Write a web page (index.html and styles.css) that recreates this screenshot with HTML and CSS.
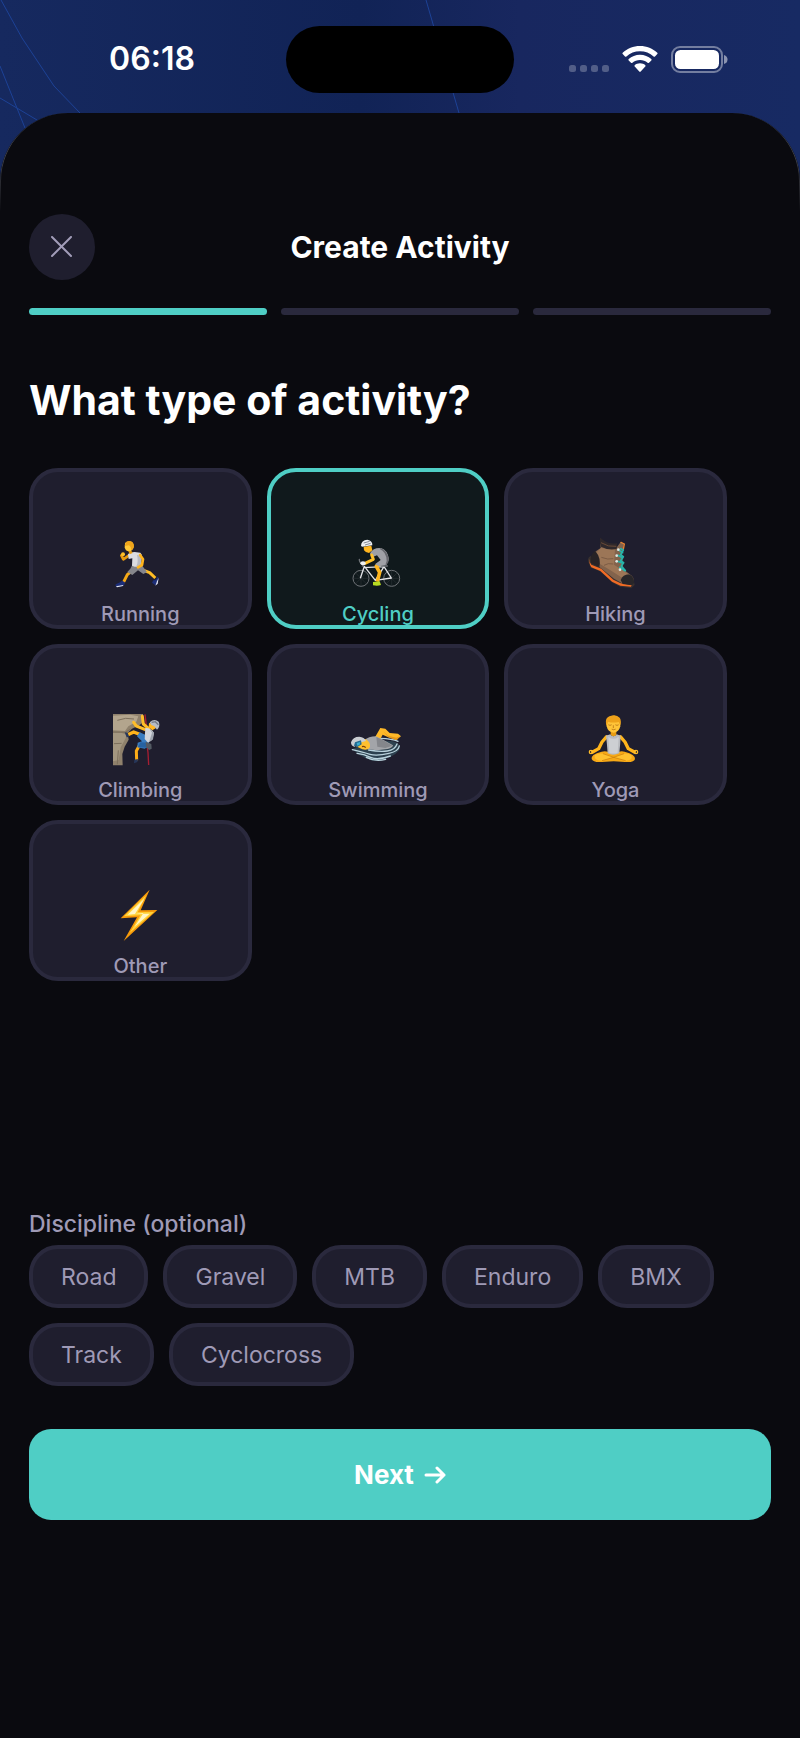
FILE: index.html
```html
<!DOCTYPE html>
<html lang="en">
<head>
  <meta charset="UTF-8">
  <meta name="viewport" content="width=device-width, initial-scale=1">
  <title>Create Activity</title>
  <link rel="stylesheet" href="styles.css">
</head>
<body>
  <div class="status">
    <svg class="status_lines" aria-hidden="true" width="800" height="200" viewBox="0 0 800 200">
      <path d="M1 0L22 38L54 86L80 113M0 66L25 128M0 98L37 120M426 0L459 113"/>
    </svg>
    <span class="time">06:18</span>
    <span class="island"></span>
    <div class="status_icons">
      <svg width="40" height="27" viewBox="0 0 40 27" fill="#fff" fill-opacity=".25" aria-hidden="true">
        <rect x="0" y="19" width="7" height="7" rx="2.500"/>
        <rect x="11" y="19" width="7" height="7" rx="2.500"/>
        <rect x="22" y="19" width="7" height="7" rx="2.500"/>
        <rect x="33" y="19" width="7" height="7" rx="2.500"/>
      </svg>
      <svg width="36" height="27" viewBox="0 0 36 27" fill="#fff" aria-hidden="true">
        <path d="M18 0C11.300 0 5.200 2.500.700 6.700Q0 7.400.700 8.100L3 10.400Q3.700 11 4.400 10.400C8 7.100 12.800 5.200 18 5.200S28 7.100 31.600 10.400Q32.300 11 33 10.400L35.300 8.100Q36 7.400 35.300 6.700C30.800 2.500 24.700 0 18 0Z"/>
        <path d="M18 8.700C13.600 8.700 9.700 10.300 6.700 13Q6 13.700 6.700 14.400L9 16.700Q9.700 17.300 10.400 16.700C12.500 14.900 15.100 13.900 18 13.900S23.500 14.900 25.600 16.700Q26.300 17.300 27 16.700L29.300 14.400Q30 13.700 29.300 13C26.300 10.300 22.400 8.700 18 8.700Z"/>
        <path d="M18 17.300C15.900 17.300 14.100 18 12.700 19.200Q12 19.900 12.700 20.600L17.300 25.600Q18 26.300 18.700 25.600L23.300 20.600Q24 19.900 23.300 19.200C21.900 18 20.100 17.300 18 17.300Z"/>
      </svg>
      <svg width="57" height="27" viewBox="0 0 57 27" aria-hidden="true">
        <rect x="1" y="1" width="50" height="25" rx="8" fill="none" stroke="#fff" stroke-opacity=".4" stroke-width="2"/>
        <rect x="4" y="4" width="44" height="19" rx="5.500" fill="#fff"/>
        <path d="M53 9Q56.500 10 56.500 13.500T53 18Z" fill="#fff" fill-opacity=".5"/>
      </svg>
    </div>
  </div>

  <main class="sheet">
    <header class="header">
      <button class="close" aria-label="Close">
        <svg width="22" height="22" viewBox="0 0 22 22"><path d="M1 1L20 20M20 1L1 20"/></svg>
      </button>
      <h1 class="title">Create Activity</h1>
    </header>

    <div class="progress">
      <span class="step active"></span>
      <span class="step"></span>
      <span class="step"></span>
    </div>

    <h2 class="question">What type of activity?</h2>

    <section class="cards">
      <button class="card">
        <svg class="emoji" viewBox="41 48 162 162" aria-hidden="true">
          <path d="M88 107L72 118L66 106" fill="none" stroke="#e79a10" stroke-width="8" stroke-linejoin="round" stroke-linecap="round"/>
          <circle cx="71" cy="103" r="6" fill="#ffbf28"/>
          <path d="M103 148L84 164L72 188" fill="none" stroke="#f5a916" stroke-width="9" stroke-linejoin="round"/>
          <path d="M127 149L151 158L168 174" fill="none" stroke="#ffbd24" stroke-width="9" stroke-linejoin="round"/>
          <path d="M49 193Q63 187 68 182L77 187Q77 195 70 198L52 202Q47 199 49 193Z" fill="#1c2e78"/>
          <path d="M50 199L72 195L71 198L53 202Z" fill="#e6e8f2"/>
          <path d="M162 181Q173 180 173 170L178 173L175 190L168 196L158 188Z" fill="#1c2e78"/>
          <path d="M178 173L175 191L168 197L173 184Z" fill="#e6e8f2"/>
          <path d="M100 133L93 146L84 156L99 165L116 151L132 162L143 156L127 135Z" fill="#85868c"/>
          <path d="M86 103Q91 96 106 96L123 98Q129 102 127 110L124 139Q111 143 98 137L99 115L88 117Z" fill="#dcdde1"/>
          <path d="M113 104Q118 126 111 139L124 139L127 110Z" fill="#b9bbc2"/>
          <path d="M122 105L131 118L128 135L116 142" fill="none" stroke="#ffb41c" stroke-width="8" stroke-linejoin="round" stroke-linecap="round"/>
          <path d="M85 89L95 91L100 99L91 103Z" fill="#e79a10"/>
          <path d="M77 69Q88 60 99 67Q107 79 99 90Q89 97 80 91L76 83Z" fill="#ffc938"/>
          <path d="M76 78L80 66Q89 60 98 65Q106 71 103 84L96 91L94 81L89 76Z" fill="#efa51b"/>
        </svg>
        <span class="card_label">Running</span>
      </button>
      <button class="card selected">
        <svg class="emoji" viewBox="46 48 162 162" aria-hidden="true">
          <g fill="none" stroke="#6f7377" stroke-width="3">
            <circle cx="76" cy="175" r="24"/>
            <circle cx="168" cy="175" r="24"/>
          </g>
          <g fill="none" stroke="#43484c" stroke-width="1">
            <path d="M52 175H100M76 151V199M59 158L93 192M59 192L93 158M144 175H192M168 151V199M151 158L185 192M151 192L185 158"/>
          </g>
          <path d="M74 175L86 139L119 181L167 174L145 140L119 181M84 143L145 140" fill="none" stroke="#e4e4e8" stroke-width="4" stroke-linejoin="round"/>
          <path d="M71 118Q70 130 85 132M80 138L88 131M137 138H155" fill="none" stroke="#707378" stroke-width="4" stroke-linecap="round"/>
          <path d="M141 125L122 139L132 157L125 185" fill="none" stroke="#ffb51e" stroke-width="11" stroke-linejoin="round"/>
          <path d="M112 186L132 184L136 195Q126 199 112 196Z" fill="#b7dc21"/>
          <path d="M103 100Q113 82 136 84Q156 90 160 118L153 134L130 139L118 133L135 120L124 106L109 112Z" fill="#9fa0a6"/>
          <path d="M131 86Q153 95 153 123L149 135L157 129L160 117Q154 92 136 84Z" fill="#66676d"/>
          <path d="M108 105L113 118L88 130" fill="none" stroke="#ffc02b" stroke-width="9" stroke-linejoin="round" stroke-linecap="round"/>
          <ellipse cx="82" cy="130" rx="8" ry="6" fill="#eef0f4"/>
          <path d="M84 80L107 77L110 91L100 99Q89 98 85 91Z" fill="#ffb51e"/>
          <path d="M76 77Q77 60 95 59Q111 62 110 76L79 80Z" fill="#eef0f4"/>
          <path d="M84 69L102 64M88 75L105 70" stroke="#858a94" stroke-width="3"/>
        </svg>
        <span class="card_label">Cycling</span>
      </button>
      <button class="card">
        <svg class="emoji" viewBox="52 48 162 162" aria-hidden="true">
          <path d="M60 108Q50 113 52 124L60 143L88 154L126 188L148 200L182 205L192 195L188 176L97 141Z" fill="#37302f"/>
          <path d="M57 116Q55 124 62 134L92 146L128 179L150 190L183 195L181 200L149 197L124 185L89 153L62 142Q54 130 57 116Z" fill="#f16b25"/>
          <path d="M88 62L90 84L72 96L66 126L91 145L130 176L153 189L186 188Q193 176 183 167L158 148L154 97L160 72L150 66L137 84Z" fill="#82634c"/>
          <path d="M91 84L133 88L130 134L154 150L172 162L152 172L118 150L78 126L75 99Z" fill="#9c7657"/>
          <path d="M92 112Q112 120 128 116M100 136Q112 128 128 132" fill="none" stroke="#6b4f3b" stroke-width="2"/>
          <path d="M74 93Q92 114 86 142L61 129Q56 104 74 93Z" fill="#272326"/>
          <path d="M88 54Q86 70 91 80Q113 92 138 87L139 70Q110 74 90 54Z" fill="#2f282b"/>
          <path d="M91 68Q113 82 137 79" fill="none" stroke="#6a4a36" stroke-width="3"/>
          <path d="M150 180Q158 162 178 164Q192 172 190 189L183 196L156 192Z" fill="#282629"/>
          <path d="M151 67L161 72L158 88" fill="none" stroke="#e58332" stroke-width="4" stroke-linecap="round"/>
          <path d="M150 86L158 90L150 104L158 110L150 122L159 128L152 138L164 152M144 90L156 98M142 106L156 114M141 124L156 130M147 142L162 152" fill="none" stroke="#26b4aa" stroke-width="5" stroke-linecap="round" stroke-linejoin="round"/>
          <g fill="#dfe6e3">
            <circle cx="143" cy="89" r="4"/>
            <circle cx="138" cy="107" r="4"/>
            <circle cx="138" cy="124" r="4"/>
            <circle cx="148" cy="149" r="4"/>
          </g>
        </svg>
        <span class="card_label">Hiking</span>
      </button>
      <button class="card">
        <svg class="emoji" viewBox="41 36 162 162" aria-hidden="true">
          <path d="M39 42H131L133 65L120 76L98 86L85 99L88 119L76 140L69 162L70 196H39Z" fill="#8f816c"/>
          <path d="M39 47L93 44L117 49L111 65L87 79L77 93L39 91Z" fill="#b3a58d"/>
          <path d="M39 99L66 98L81 104L79 115L64 142L58 180L39 184Z" fill="#a49780"/>
          <path d="M39 96L78 97L94 87M54 61L79 55L104 57M44 131L67 130M57 151L54 193" fill="none" stroke="#7d705c" stroke-width="3"/>
          <path d="M137 43Q143 80 141 120L146 158L148 195" fill="none" stroke="#a51e32" stroke-width="4"/>
          <path d="M136 88L111 78L103 67M148 86L132 72L129 49" fill="none" stroke="#ffbd29" stroke-width="9" stroke-linecap="round" stroke-linejoin="round"/>
          <path d="M123 104L103 96L84 105" fill="none" stroke="#ffb31b" stroke-width="10" stroke-linejoin="round"/>
          <path d="M120 136L111 153L112 181" fill="none" stroke="#ffad17" stroke-width="9" stroke-linejoin="round"/>
          <path d="M76 97L85 98L90 111L82 112Z" fill="#27375a"/>
          <path d="M105 179L116 177L114 186L104 190Z" fill="#27375a"/>
          <path d="M121 97L141 106L151 136L136 146L114 142L115 128L128 124L113 109Z" fill="#397cc1"/>
          <path d="M123 127L148 128L143 143L116 142Z" fill="#2762a1"/>
          <path d="M138 84Q155 83 164 99L159 119L146 128L136 117Z" fill="#d2d5db"/>
          <path d="M151 87L158 98L149 127L161 118L164 98Z" fill="#9ea4ae"/>
          <path d="M139 125L156 132L157 146L149 150L140 140Z" fill="#535a63"/>
          <path d="M149 69L172 73L169 85L159 91L148 82Z" fill="#ffb625"/>
          <path d="M151 67Q165 54 178 65Q184 78 173 89L165 79L156 75Z" fill="#b6bbc4"/>
          <path d="M157 67L168 65L177 74" fill="none" stroke="#737984" stroke-width="4"/>
        </svg>
        <span class="card_label">Climbing</span>
      </button>
      <button class="card">
        <svg class="emoji" viewBox="46 36 162 162" aria-hidden="true">
          <path d="M50 147Q97 122 151 122Q192 121 193 145Q186 164 149 177Q119 188 102 179Q71 169 50 147Z" fill="#2d4250"/>
          <g fill="none" stroke="#b9d3dd" stroke-width="4" stroke-linecap="round">
            <path d="M50 149Q83 157 103 163T160 160Q188 154 191 138M64 160Q84 162 105 172T164 168M99 150Q132 156 155 153Q178 150 184 132M92 172Q118 186 150 178M133 115Q170 116 187 124"/>
          </g>
          <path d="M112 122L134 84L149 86L162 99L187 101L196 109L181 120L158 112L141 104L128 128Z" fill="#ffb928"/>
          <path d="M143 94L157 107L182 113L193 108L184 120L158 112Z" fill="#e59718"/>
          <path d="M84 122Q99 109 121 109L145 121L172 136Q172 143 156 147L124 151L90 147Z" fill="#a3a5a9"/>
          <path d="M122 111L147 123L170 137L149 144L125 140Z" fill="#84868b"/>
          <path d="M57 117L91 118Q105 128 103 141Q97 153 80 148L60 138Z" fill="#ffc02e"/>
          <path d="M46 127Q51 110 71 110Q86 111 91 123L68 129L57 140Q46 139 46 127Z" fill="#c9cdd2"/>
          <path d="M58 127L76 121L78 133L65 141L55 137Z" fill="#246a91"/>
          <path d="M63 129L74 126L72 134L65 137Z" fill="#39afd0"/>
          <path d="M79 140Q86 137 90 143" fill="none" stroke="#7a4209" stroke-width="4"/>
        </svg>
        <span class="card_label">Swimming</span>
      </button>
      <button class="card">
        <svg class="emoji" viewBox="52 36 162 162" aria-hidden="true">
          <path d="M108 110L94 126L84 146L66 156M149 110L163 126L173 146L191 156" fill="none" stroke="#ffb51c" stroke-width="10" stroke-linecap="round" stroke-linejoin="round"/>
          <path d="M93 155Q59 163 63 177Q67 188 94 186L129 184L163 186Q191 188 193 177Q195 163 162 155Q144 151 129 163Q112 151 93 155Z" fill="#f7a916"/>
          <path d="M106 107L119 103Q128 115 138 103L150 107Q149 130 146 160Q127 168 111 160Q109 130 106 107Z" fill="#b9bbc0"/>
          <path d="M113 110Q128 123 144 110L141 158Q127 163 116 158Z" fill="#cdcfd3"/>
          <path d="M72 166Q82 158 97 161L129 172L92 182Q70 182 72 166ZM183 166Q174 158 160 161L129 172L165 182Q186 182 183 166Z" fill="#ffc12e"/>
          <path d="M97 161L129 172L165 182M160 161L129 172L94 182" fill="none" stroke="#c97c0c" stroke-width="2"/>
          <path d="M120 92H137V104Q129 114 120 104Z" fill="#e89c12"/>
          <circle cx="61" cy="156" r="5" fill="none" stroke="#ffbd2a" stroke-width="4"/>
          <circle cx="196" cy="156" r="5" fill="none" stroke="#ffbd2a" stroke-width="4"/>
          <path d="M107 61Q111 47 130 47Q149 49 149 69V79Q145 96 129 98Q111 96 108 79Z" fill="#ffc438"/>
          <path d="M106 72Q103 51 119 48Q136 41 147 53Q153 62 149 76L144 66Q126 70 112 65L108 78Z" fill="#eea21a"/>
          <path d="M114 75Q118 78 122 75M135 75Q139 78 143 75M124 88Q129 91 134 88M128 77V83" fill="none" stroke="#a7620d" stroke-width="2" stroke-linecap="round"/>
        </svg>
        <span class="card_label">Yoga</span>
      </button>
      <button class="card">
        <svg class="emoji" viewBox="279 234 162 162" aria-hidden="true">
          <path d="M389 239L302 325L351 322L311 393L412 300L362 301Z" fill="#f79a09"/>
          <path d="M379 255L312 319L361 316L329 369L402 306L353 307Z" fill="#ffd43c"/>
          <path d="M373 266L323 314L370 310L344 350L389 311L345 312Z" fill="#fff6c8"/>
        </svg>
        <span class="card_label">Other</span>
      </button>
    </section>

    <section class="discipline">
      <h3 class="discipline_title">Discipline (optional)</h3>
      <div class="chips">
        <button class="chip">Road</button>
        <button class="chip">Gravel</button>
        <button class="chip">MTB</button>
        <button class="chip">Enduro</button>
        <button class="chip">BMX</button>
        <button class="chip">Track</button>
        <button class="chip">Cyclocross</button>
      </div>
    </section>

    <button class="next">Next
      <svg width="22" height="18" viewBox="0 0 22 18" aria-hidden="true"><path d="M2 9H20M13 2L20 9L13 16"/></svg>
    </button>
  </main>
</body>
</html>
```
FILE: styles.css
```css
*{
  box-sizing: border-box;
}
body{
  margin: 0;
  min-height: 100vh;
  display: flex;
  flex-direction: column;
  background: linear-gradient(90deg, #16295f, #112356 45%, #18275f 65%, #172a63) #0a0a0f;
  font-family: Inter, "Liberation Sans", sans-serif;
}
button{
  font-family: inherit;
  cursor: pointer;
}
h1, h2, h3{
  margin: 0;
}
.status{
  position: relative;
  display: grid;
  grid-template-columns: 1fr 228px 1fr;
  align-items: center;
  height: 113px;
  padding-top: 5px;
}
.status_lines{
  position: absolute;
  left: 0;
  top: 0;
  fill: none;
  stroke: #1d4296;
  stroke-width: 1;
}
.time{
  padding-left: 18px;
  text-align: center;
  color: #fff;
  font-size: 32px;
  line-height: 40px;
  font-weight: 600;
}
.island{
  position: relative;
  height: 67px;
  border-radius: 34px;
  background: #000;
}
.status_icons{
  display: flex;
  justify-content: center;
  gap: 13px;
  padding-right: 18px;
}
.sheet{
  position: relative;
  flex: 1;
  padding: 101px 29px 40px;
  border-radius: 68px 68px 0 0;
  background: #0a0a0f;
}
/* faint rim on the rounded corners */
.sheet::before{
  content: "";
  position: absolute;
  left: 0;
  right: 0;
  top: 0;
  height: 110px;
  border: 1px solid #44464e;
  border-width: 0 1px;
  border-radius: 68px 68px 0 0;
  -webkit-mask-image: linear-gradient(#000 40%, transparent 90%);
  mask-image: linear-gradient(#000 40%, transparent 90%);
  pointer-events: none;
}
.header{
  display: grid;
  grid-template-columns: 66px 1fr 66px;
  align-items: center;
}
.close{
  display: flex;
  align-items: center;
  justify-content: center;
  width: 66px;
  height: 66px;
  padding: 0;
  border: none;
  border-radius: 50%;
  background: #1f1e2e;
}
.close svg{
  fill: none;
  stroke: #a29db9;
  stroke-width: 2;
  stroke-linecap: round;
}
.title{
  text-align: center;
  color: #fff;
  font-size: 30px;
  line-height: 36px;
  font-weight: 700;
}
.progress{
  display: flex;
  gap: 14px;
  margin-top: 28px;
}
.step{
  flex: 1;
  height: 7px;
  border-radius: 4px;
  background: #2a293d;
}
.step.active{
  background: #4fcec5;
}
.question{
  margin-top: 59px;
  color: #fff;
  font-size: 41px;
  line-height: 52px;
  font-weight: 700;
}
.cards{
  display: flex;
  flex-wrap: wrap;
  gap: 15px;
  margin-top: 42px;
}
.card{
  display: flex;
  flex-direction: column;
  align-items: center;
  justify-content: flex-end;
  gap: 13px;
  width: 30%;
  height: 161px;
  padding: 0;
  border: 4px solid #2a293d;
  border-radius: 29px;
  background: #1f1e2e;
  color: #9f9ab6;
}
.card.selected{
  border-color: #4fcec5;
  background: #10191c;
  color: #4fcec5;
}
.emoji{
  width: 54px;
  height: 54px;
}
.card_label{
  font-size: 20px;
  line-height: 22px;
  font-weight: 500;
}
.discipline{
  margin-top: 229px;
}
.discipline_title{
  color: #9f9ab6;
  font-size: 23px;
  line-height: 28px;
  font-weight: 500;
}
.chips{
  display: flex;
  flex-wrap: wrap;
  gap: 15px;
  margin-top: 7px;
}
.chip{
  height: 63px;
  padding: 0 28px;
  border: 4px solid #2a293d;
  border-radius: 29px;
  background: #1f1e2e;
  color: #9f9ab6;
  font-size: 23px;
  line-height: 28px;
}
.next{
  display: flex;
  align-items: center;
  justify-content: center;
  gap: 10px;
  width: 100%;
  height: 91px;
  margin-top: 43px;
  border: none;
  border-radius: 22px;
  background: #4fcec5;
  color: #fff;
  font-size: 26px;
  line-height: 32px;
  font-weight: 700;
}
.next svg{
  fill: none;
  stroke: #fff;
  stroke-width: 3;
  stroke-linecap: round;
  stroke-linejoin: round;
}
```
